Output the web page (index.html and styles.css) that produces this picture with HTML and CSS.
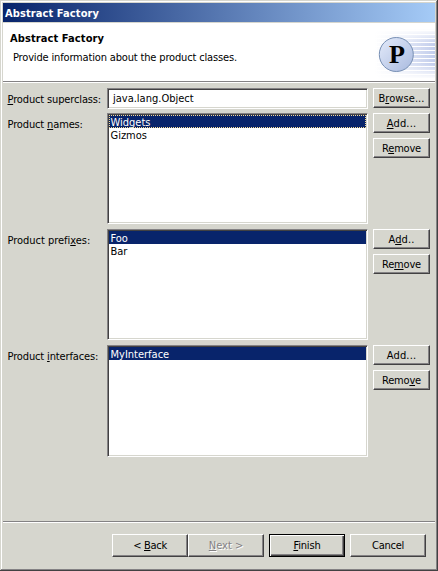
FILE: index.html
```html
<!DOCTYPE html>
<html lang="en">
<head>
<meta charset="utf-8">
<title>Abstract Factory</title>
<link rel="stylesheet" href="styles.css">
</head>
<body>
<div class="window">
  <div class="titlebar"><span class="t-title">Abstract Factory</span></div>
  <header class="header">
    <div class="heading">
      <h1><span class="t-title">Abstract Factory</span></h1>
      <p><span class="t-desc">Provide information about the product classes.</span></p>
    </div>
    <svg class="banner" width="60" height="58" viewBox="0 0 60 58">
      <defs>
        <linearGradient id="fade" x1="0" x2="1" y1="0" y2="0"><stop offset="0" stop-color="#c8d2ee" stop-opacity="0"/><stop offset="1" stop-color="#c2cdec"/></linearGradient>
        <linearGradient id="edge" x1="0" x2="0" y1="0" y2="1"><stop offset="0" stop-color="#fff"/><stop offset=".3" stop-color="#fff" stop-opacity="0"/><stop offset=".7" stop-color="#fff" stop-opacity="0"/><stop offset="1" stop-color="#fff"/></linearGradient>
        <linearGradient id="ball" x1="0" x2="1" y1="0" y2="1"><stop offset="0" stop-color="#e4ebfa"/><stop offset="1" stop-color="#a9badf"/></linearGradient>
        <pattern id="lines" width="60" height="4" patternUnits="userSpaceOnUse"><rect width="60" height="3" fill="url(#fade)"/></pattern>
      </defs>
      <rect x="0" y="6" width="60" height="50" fill="url(#lines)"/>
      <rect x="0" y="6" width="60" height="50" fill="url(#edge)"/>
      <circle cx="21.3" cy="31.5" r="17" fill="url(#ball)" stroke="#7890b4"/>
      <text x="14" y="40" textLength="16" lengthAdjust="spacingAndGlyphs" class="glyph">P</text>
    </svg>
  </header>
  <main class="form">
    <div class="row field-row">
      <label><span class="t-label"><u>P</u>roduct superclass:</span></label>
      <div class="field sunken"><span>java.lang.Object</span></div>
      <div class="actions"><button><span class="t-browse">B<u>r</u>owse...</span></button></div>
    </div>
    <div class="row">
      <label><span class="t-label">Product <u>n</u>ames:</span></label>
      <div class="list sunken"><div class="item selected focused"><span>Widgets</span></div><div class="item"><span>Gizmos</span></div></div>
      <div class="actions"><button><span class="t-add"><u>A</u>dd...</span></button><button><span class="t-remove">R<u>e</u>move</span></button></div>
    </div>
    <div class="row">
      <label><span class="t-prefixes">Product prefi<u>x</u>es:</span></label>
      <div class="list sunken"><div class="item selected"><span>Foo</span></div><div class="item"><span>Bar</span></div></div>
      <div class="actions"><button><span class="t-add">A<u>d</u>d..</span></button><button><span class="t-remove">Re<u>m</u>ove</span></button></div>
    </div>
    <div class="row last-row">
      <label><span class="t-label">Product <u>i</u>nterfaces:</span></label>
      <div class="list sunken"><div class="item selected"><span>MyInterface</span></div></div>
      <div class="actions"><button><span class="t-add">Add...</span></button><button><span class="t-remove">Remo<u>v</u>e</span></button></div>
    </div>
  </main>
  <footer class="footer">
    <div class="pair"><button><span class="t-back">&lt; <u>B</u>ack</span></button><button class="disabled"><span><u>N</u>ext &gt;</span></button></div>
    <button class="default"><span class="t-finish"><u>F</u>inish</span></button>
    <button><span class="t-cancel">Cancel</span></button>
  </footer>
</div>
</body>
</html>
```
FILE: styles.css
```css
* { box-sizing: border-box; }
body { margin: 0; overflow: hidden; font: 11px/13px "DejaVu Sans Condensed", "DejaVu Sans", sans-serif; font-stretch: condensed; color: #000; }
span { white-space: nowrap; }
u { text-decoration: underline; text-decoration-thickness: 1px; text-underline-offset: 1px; text-decoration-skip-ink: none; }
.window {
  width: 438px; height: 571px; background: #d6d6ce; padding: 3px 3px 2px;
  display: flex; flex-direction: column;
  box-shadow: inset -1px -1px #424142, inset 1px 1px #d6d6ce, inset -2px -2px #848284, inset 2px 2px #fff;
}
.titlebar { height: 19px; flex: none; padding: 4px 2px; color: #fff; font-weight: bold; background: linear-gradient(90deg, #08246b, #a5cbf7); }
.header { height: 60px; flex: none; margin-top: 1px; background: #fff; border-bottom: 1px solid #fff; box-shadow: inset 0 -1px #848284; display: flex; justify-content: space-between; }
.heading { padding: 9px 0 0 7px; }
h1 { margin: 0; font-size: 11px; line-height: 13px; }
p { margin: 6px 0 0 3px; }
.banner { flex: none; display: block; }
.glyph { font: bold 25px "Liberation Serif", serif; }
.t-title { letter-spacing: .1px; }
.t-desc { letter-spacing: -.16px; }
.t-label { letter-spacing: -.14px; }
.t-prefixes { letter-spacing: -.03px; }
.t-browse { letter-spacing: .08px; }
.t-add { letter-spacing: .15px; }
.t-remove { letter-spacing: -.2px; }
.t-back { letter-spacing: -.3px; }
.t-finish { letter-spacing: -.15px; }
.t-cancel { letter-spacing: -.25px; }
.form { padding: 5px 5px 0 4px; display: flex; flex-direction: column; gap: 5px; }
.row { display: grid; grid-template-columns: 100px 261px 57px; height: 111px; }
.field-row { height: 20px; }
.last-row { height: 112px; }
label { padding: 5px 0 0 .5px; }
.sunken { background: #fff; border: 1px solid; border-color: #848284 #fff #fff #848284; box-shadow: inset 1px 1px #424142, inset -1px -1px #d6d6ce; }
.actions { margin-left: 5px; width: 57px; display: flex; flex-direction: column; gap: 5px; }
.field { padding: 3px 5px; }
.list { padding: 1px; }
.item { height: 13px; padding: 1px 0 0 1.5px; }
.selected { background: #08246b; color: #fff; }
.focused { outline: 1px dotted #f7db94; outline-offset: -1px; }
button {
  height: 20px; padding: 0; color: #000; font: inherit; line-height: 13px; background: #d6d6ce; border: 1px solid;
  border-color: #fff #424142 #424142 #fff; box-shadow: inset -1px -1px #848284; border-radius: 0;
  display: flex; align-items: center; justify-content: center;
}
.footer { margin-top: auto; height: 48px; flex: none; border-top: 1px solid #848284; box-shadow: inset 0 1px #fff; padding: 12px 9px 0 0; display: flex; gap: 5px; justify-content: flex-end; }
.pair { display: flex; }
.footer button { width: 76px; height: 23px; }
.footer .default { border-color: #000; box-shadow: inset 1px 1px #fff, inset -1px -1px #424142, inset -2px -2px #848284; }
.footer .disabled { color: #848284; text-shadow: 1px 1px #fff; }
```
